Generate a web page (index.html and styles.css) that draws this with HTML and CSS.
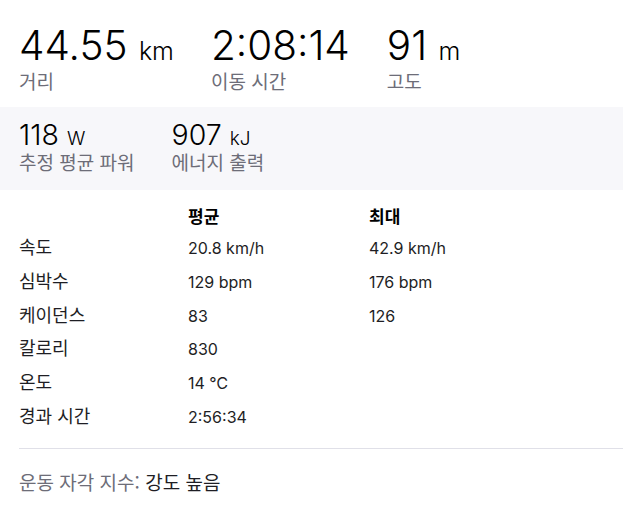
FILE: index.html
```html
<!DOCTYPE html>
<html lang="ko">
<head>
    <meta charset="UTF-8">
    <meta name="viewport" content="width=device-width, initial-scale=1.0">
    <title>활동 요약</title>
    <link rel="stylesheet" href="styles.css">
</head>
<body>

    <!-- Main stats -->
    <div class="primary">
        <div class="stat">
            <div class="value">44.55 <span class="unit">km</span></div>
            <div class="label">거리</div>
        </div>
        <div class="stat">
            <div class="value">2:08:14</div>
            <div class="label">이동 시간</div>
        </div>
        <div class="stat">
            <div class="value">91 <span class="unit">m</span></div>
            <div class="label">고도</div>
        </div>
    </div>

    <!-- Secondary stats -->
    <div class="secondary">
        <div class="stat">
            <div class="value">118 <span class="unit">W</span></div>
            <div class="label">추정 평균 파워</div>
        </div>
        <div class="stat">
            <div class="value">907 <span class="unit">kJ</span></div>
            <div class="label">에너지 출력</div>
        </div>
    </div>

    <!-- Detail table -->
    <div class="details">
        <div class="name"></div>
        <div class="name head">평균</div>
        <div class="name head">최대</div>

        <div class="name">속도</div>
        <div>20.8 km/h</div>
        <div>42.9 km/h</div>

        <div class="name">심박수</div>
        <div>129 bpm</div>
        <div>176 bpm</div>

        <div class="name">케이던스</div>
        <div>83</div>
        <div>126</div>

        <div class="name">칼로리</div>
        <div>830</div>
        <div></div>

        <div class="name">온도</div>
        <div>14 ℃</div>
        <div></div>

        <div class="name">경과 시간</div>
        <div>2:56:34</div>
        <div></div>
    </div>

    <div class="divider"></div>

    <div class="effort">
        <span class="effort-label">운동 자각 지수:</span> 강도 높음
    </div>

</body>
</html>
```

FILE: styles.css
```css
body {
    font-family: Inter, "Noto Sans CJK KR", sans-serif;
    background-color: white;
    color: #1e1e24;
    margin: 0;
    padding: 0;
}
.primary {
    display: flex;
    gap: 37px;
    padding: 23px 19px 0;
    height: 84px;
}
.primary .value {
    font-size: 40.5px;
    font-weight: 300;
    line-height: 46px;
    color: #000;
}
.primary .unit {
    font-size: 25px;
    line-height: 20px;
}
.stat .label {
    font-family: "Noto Sans CJK KR", sans-serif;
    font-size: 19px;
    line-height: 24px;
    color: #6d6d78;
}
.secondary {
    display: flex;
    gap: 37px;
    background-color: #f7f7fa;
    padding: 13px 19px 0;
    height: 70px;
}
.secondary .value {
    font-size: 28.5px;
    font-weight: 300;
    line-height: 30px;
    color: #000;
}
.secondary .unit {
    font-size: 19px;
    line-height: 20px;
}
.details {
    display: grid;
    grid-template-columns: 169px 181px auto;
    grid-template-rows: 30.85px;
    grid-auto-rows: 33.7px;
    padding: 11.4px 19px 0;
    font-size: 16px;
    line-height: 33.7px;
}
.details .name {
    font-family: "Noto Sans CJK KR", sans-serif;
    font-size: 18px;
    line-height: 29.6px;
}
.details .head {
    font-size: 17px;
    font-weight: bold;
    color: #000;
}
.divider {
    height: 1px;
    background-color: #e0e0e8;
    margin: 13.5px 0 0 19px;
}
.effort {
    font-family: "Noto Sans CJK KR", sans-serif;
    font-size: 19px;
    line-height: 24px;
    padding: 21px 19px 0;
}
.effort-label {
    color: #6d6d78;
}
```
